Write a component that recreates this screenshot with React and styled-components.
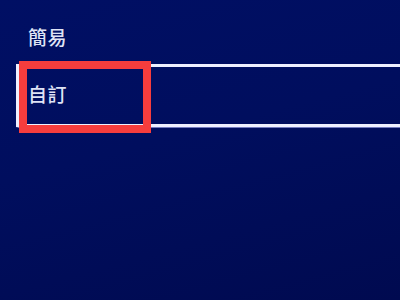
import styled, { createGlobalStyle } from "styled-components";

const Global = createGlobalStyle`
  html, body {
    margin: 0;
    padding: 0;
    background: #000e5e;
  }
  * { box-sizing: border-box; }
`;

const Screen = styled.div`
  width: 400px;
  height: 300px;
  overflow: hidden;
  background: linear-gradient(165deg, #000f64 0%, #000e5e 45%, #000a50 100%);
  font-family: "Noto Sans CJK TC", "Noto Sans", sans-serif;
  padding: 12px 0 0 16px;
`;

const List = styled.div`
  display: flex;
  flex-direction: column;
`;

const Row = styled.div`
  position: relative;
  display: flex;
  align-items: center;
  height: ${(p) => (p.$selected ? "63px" : "52px")};
  padding-left: ${(p) => (p.$selected ? "9px" : "12px")};
  padding-bottom: 4px;
  margin-right: ${(p) => (p.$selected ? "-10px" : "0")};
  border: ${(p) => (p.$selected ? "3px solid #eef0ff" : "none")};
  border-right: none;
  box-shadow: ${(p) =>
    p.$selected ? "0 0 1px 0.5px rgba(190, 195, 255, 0.6)" : "none"};
`;

const Label = styled.span`
  color: #dfe3f5;
  font-size: 19px;
  font-weight: 500;
  letter-spacing: 0.5px;
  line-height: 1;
`;

const Highlight = styled.div`
  position: absolute;
  left: 0px;
  top: -6px;
  width: 132px;
  height: 72px;
  border: 8px solid #f63d3d;
  pointer-events: none;
`;

export default function App() {
  return (
    <>
      <Global />
      <Screen>
        <List>
          <Row>
            <Label>簡易</Label>
          </Row>
          <Row $selected>
            <Label>自訂</Label>
            <Highlight />
          </Row>
        </List>
      </Screen>
    </>
  );
}
